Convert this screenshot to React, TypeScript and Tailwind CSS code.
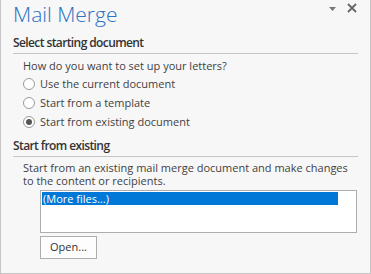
export default function App() {
  const font = { fontFamily: '"Open Sans", "Noto Sans", sans-serif' };
  return (
    <div
      className="w-[371px] h-[274px] bg-[#f7f7f7] border-x border-b border-[#c6c6c6] text-[#3f3f3f] overflow-hidden"
      style={font}
    >
      {/* header */}
      <div className="flex items-start justify-between h-[34px]">
        <div className="pl-[12px] text-[21px] leading-[28px] font-light text-[#2b72c2]">
          Mail Merge
        </div>
        <div className="flex items-center gap-[11px] pt-[3px] pr-[13px]">
          <svg width="7" height="4" viewBox="0 0 7 4" className="mt-[2px]">
            <path d="M0 0h7L3.5 4z" fill="#777" />
          </svg>
          <svg width="10" height="10" viewBox="0 0 10 10">
            <path d="M1 1l8 8M9 1l-8 8" stroke="#666" strokeWidth="1.8" />
          </svg>
        </div>
      </div>

      {/* select starting document */}
      <div className="mx-[12px] border-b border-[#c6c6c6] text-[12px] tracking-[-0.6px] font-semibold text-[#333] leading-[18px] pb-[1px]">
        Select starting document
      </div>
      <div className="pl-[22px] pt-[4px] text-[11px] leading-[16px]">
        <div>How do you want to set up your letters?</div>
        <div className="flex flex-col">
          {[
            { label: "Use the current document", on: false },
            { label: "Start from a template", on: false },
            { label: "Start from existing document", on: true },
          ].map((r) => (
            <div key={r.label} className="flex items-center h-[19px]">
              <span className="w-[12px] h-[12px] rounded-full border border-[#9a9a9a] bg-white flex items-center justify-center">
                {r.on && <span className="w-[6px] h-[6px] rounded-full bg-[#555]" />}
              </span>
              <span className="ml-[5px]">{r.label}</span>
            </div>
          ))}
        </div>
      </div>

      {/* start from existing */}
      <div className="mx-[12px] mt-[6px] border-b border-[#c6c6c6] text-[12px] tracking-[-0.6px] font-semibold text-[#333] leading-[18px] pb-[1px]">
        Start from existing
      </div>
      <div className="pl-[22px] pt-[4px] text-[11px] leading-[13px] whitespace-nowrap">
        Start from an existing mail merge document and make changes
        <br />
        to the content or recipients.
      </div>
      <div className="ml-[39px] mr-[13px] mt-[3px] h-[43px] border border-[#adadad] bg-white p-[1px]">
        <div className="w-[296px] h-[13px] bg-[#0078d7] text-white text-[11px] leading-[13px] pl-[1px]">
          (More files...)
        </div>
      </div>
      <div className="ml-[39px] mt-[3px] w-[57px] h-[23px] border border-[#adadad] bg-[#fdfdfd] text-[11px] flex items-center justify-center text-[#333]">
        Open...
      </div>
    </div>
  );
}
